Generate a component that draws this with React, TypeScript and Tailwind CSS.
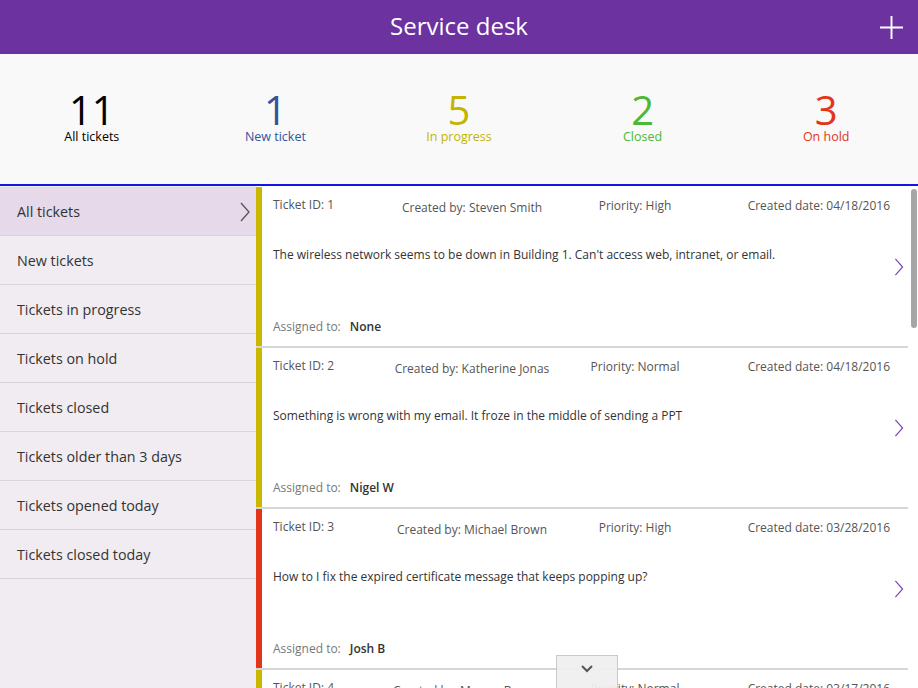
import React from 'react';

const stats = [
    { value: '11', label: 'All tickets', color: 'text-black' },
    { value: '1', label: 'New ticket', color: 'text-[#34539c]' },
    { value: '5', label: 'In progress', color: 'text-[#c4b400]' },
    { value: '2', label: 'Closed', color: 'text-[#4cb834]' },
    { value: '3', label: 'On hold', color: 'text-[#e2361a]' },
];

const filters = [
    'All tickets',
    'New tickets',
    'Tickets in progress',
    'Tickets on hold',
    'Tickets closed',
    'Tickets older than 3 days',
    'Tickets opened today',
    'Tickets closed today',
];

const tickets = [
    { id: 1, by: 'Steven Smith', priority: 'High', date: '04/18/2016', text: "The wireless network seems to be down in Building 1. Can't access web, intranet, or email.", assigned: 'None', bar: 'bg-[#c9b700]' },
    { id: 2, by: 'Katherine Jonas', priority: 'Normal', date: '04/18/2016', text: 'Something is wrong with my email. It froze in the middle of sending a PPT', assigned: 'Nigel W', bar: 'bg-[#c9b700]' },
    { id: 3, by: 'Michael Brown', priority: 'High', date: '03/28/2016', text: 'How to I fix the expired certificate message that keeps popping up?', assigned: 'Josh B', bar: 'bg-[#e2361a]' },
    { id: 4, by: 'Murray Burrows', priority: 'Normal', date: '03/17/2016', text: 'My laptop will not connect to the docking station.', assigned: 'None', bar: 'bg-[#c9b700]' },
];

const Chevron = ({ className }: { className: string }) => (
    <svg viewBox="0 0 10 20" className={className} fill="none" stroke="currentColor" strokeWidth="1.3">
        <path d="M1 1 L9 10 L1 19" />
    </svg>
);

const App: React.FC = () => {
    return (
        <div className="w-[918px] h-[688px] overflow-hidden flex flex-col bg-white font-['Open_Sans',sans-serif]">
            {/* header */}
            <div className="h-[54px] shrink-0 bg-[#6c32a0] flex items-center relative">
                <h1 className="flex-1 text-center text-white text-[24px] leading-none pb-[2px]">Service desk</h1>
                <svg viewBox="0 0 24 24" className="absolute right-[15px] top-[16px] w-[23px] h-[23px]" stroke="white" strokeWidth="2">
                    <path d="M12 0 V24 M0 12 H24" />
                </svg>
            </div>

            {/* stats */}
            <div className="h-[132px] shrink-0 bg-[#f9f9f9] grid grid-cols-5 border-b-[2px] border-[#1414e6]">
                {stats.map(s => (
                    <div key={s.label} className="flex flex-col items-center pt-[37px]">
                        <span className={`text-[40px] leading-[38px] ${s.color}`}>{s.value}</span>
                        <span className={`text-[12.5px] leading-[16px] ${s.color}`}>{s.label}</span>
                    </div>
                ))}
            </div>

            <div className="flex flex-1 min-h-0">
                {/* sidebar */}
                <div className="w-[256px] shrink-0 bg-[#f0ecf2] pt-[1px]">
                    {filters.map((f, i) => (
                        <div
                            key={f}
                            className={`h-[49px] flex items-center justify-between pl-[17px] pr-[6px] pt-[2px] border-b border-[#d9d5dc] text-[14.3px] text-[#333] ${i === 0 ? 'bg-[#e5d9ea] h-[48px]' : ''}`}
                        >
                            <span>{f}</span>
                            {i === 0 && <Chevron className="w-[10px] h-[20px] text-[#555]" />}
                        </div>
                    ))}
                </div>

                {/* ticket list */}
                <div className="flex-1 relative overflow-hidden pt-[1px]">
                    {tickets.map(t => (
                        <div key={t.id} className="flex h-[161px] mr-[10px] border-b-[2px] border-[#d6d6d6]">
                            <div className={`w-[6px] shrink-0 ${t.bar}`} />
                            <div className="flex-1 flex flex-col pl-[11px] pt-[10px] pb-[11px] text-[12px] leading-[16px]">
                                <div className="grid grid-cols-[110px_178px_148px_1fr] text-[#555]">
                                    <span>Ticket ID: {t.id}</span>
                                    <span className="text-center mt-[3px]">Created by: {t.by}</span>
                                    <span className="text-center mt-[1px]">Priority: {t.priority}</span>
                                    <span className="text-right mt-[1px]">Created date: {t.date}</span>
                                </div>
                                <p className="mt-[31px] text-[#333]">{t.text}</p>
                                <div className="mt-auto text-[#777]">
                                    Assigned to:<span className="ml-[9px] font-semibold text-[#333]">{t.assigned}</span>
                                </div>
                            </div>
                            <div className="w-[18px] shrink-0 flex items-center justify-center pt-[1px]">
                                <Chevron className="w-[10px] h-[18px] text-[#7a45b0]" />
                            </div>
                        </div>
                    ))}

                    {/* scrollbar thumb */}
                    <div className="absolute right-[1px] top-[3px] w-[6px] h-[139px] rounded-full bg-[#a6a6a6]" />

                    {/* scroll down button */}
                    <div className="absolute left-[300px] top-[469px] w-[62px] h-[40px] bg-[#efefef]/95 border border-[#c9c9c9] flex justify-center pt-[9px]">
                        <svg viewBox="0 0 12 8" className="w-[12px] h-[8px]" fill="none" stroke="#555" strokeWidth="2">
                            <path d="M1 1 L6 6 L11 1" />
                        </svg>
                    </div>
                </div>
            </div>
        </div>
    );
};

export default App;
